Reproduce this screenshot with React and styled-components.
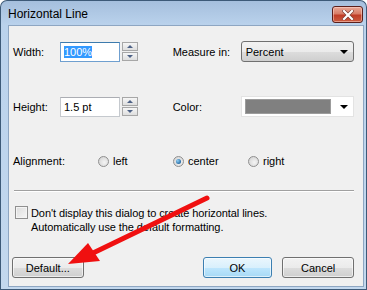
import styled, { createGlobalStyle } from "styled-components";

const Global = createGlobalStyle`
  html, body { margin: 0; padding: 0; background: #fff; }
  body { font-family: "Liberation Sans", Arial, sans-serif; font-size: 11px; color: #000; }
`;

const Window = styled.div`
  position: relative;
  width: 367px;
  height: 290px;
  box-sizing: border-box;
  border: 1px solid #3d5a78;
  border-bottom: none;
  border-radius: 7px 7px 0 0;
  background: linear-gradient(180deg, #a5bfdd 0px, #bad2ec 24px, #c3d8ee 100%);
  display: flex;
  flex-direction: column;
  overflow: hidden;
`;

const TitleBar = styled.div`
  height: 24px;
  display: flex;
  align-items: center;
  justify-content: space-between;
  padding: 0 3px 0 7px;
  flex-shrink: 0;
`;

const Title = styled.div`
  font-size: 12px;
  color: #000;
  padding-top: 1px;
`;

const CloseButton = styled.div`
  width: 31px;
  height: 17px;
  margin-top: 3px;
  box-sizing: border-box;
  border: 1px solid #5b1f1b;
  border-radius: 3px;
  background: linear-gradient(180deg, #e9a898 0%, #d77c66 45%, #c03d27 55%, #cb5c40 100%);
  box-shadow: inset 0 0 0 1px rgba(255, 220, 210, 0.5);
  display: flex;
  align-items: center;
  justify-content: center;
`;

const Content = styled.div`
  flex: 1;
  margin: 0 2px 2px 7px;
  background: #f0f0f0;
  border: 1px solid #8ea6c2;
  position: relative;
`;

const Bottom = styled.div`
  height: 1px;
  background: #3d5a78;
`;

const Form = styled.div`
  padding: 15px 9px 0 4px;
`;

const FieldRow = styled.div`
  display: flex;
  align-items: center;
  height: 21px;
  margin-bottom: ${p => p.$gap || 0}px;
`;

const Label = styled.div`
  width: ${p => p.$w}px;
  flex-shrink: 0;
`;

const TextBox = styled.div`
  width: 60px;
  height: 20px;
  box-sizing: border-box;
  border: 1px solid ${p => (p.$focus ? "#6f9fcf" : "#c5c9ce")};
  border-top-color: ${p => (p.$focus ? "#3d7bad" : "#abadb3")};
  background: #fff;
  display: flex;
  align-items: center;
  padding-left: 3px;
`;

const Selected = styled.span`
  background: #3399ff;
  color: #fff;
`;

const Spin = styled.div`
  display: flex;
  flex-direction: column;
  gap: 1px;
  margin-left: 2px;
  margin-right: 35px;
`;

const SpinBtn = styled.div`
  width: 16px;
  height: 9px;
  box-sizing: border-box;
  border: 1px solid #a7a7a7;
  background: linear-gradient(180deg, #f6f6f6, #dedede);
  display: flex;
  align-items: center;
  justify-content: center;
`;

const Tri = styled.div`
  width: 0;
  height: 0;
  border-left: ${p => p.$size || 3}px solid transparent;
  border-right: ${p => p.$size || 3}px solid transparent;
  ${p => (p.$up ? "border-bottom" : "border-top")}: ${p => p.$size || 3}px solid ${p => p.$color || "#4d6185"};
`;

const Combo = styled.div`
  width: 114px;
  height: 21px;
  box-sizing: border-box;
  border: 1px solid ${p => (p.$flat ? "#e3e3e3" : "#707070")};
  border-radius: ${p => (p.$flat ? 0 : 3)}px;
  background: ${p => (p.$flat ? "#fff" : "linear-gradient(180deg, #f2f2f2 0%, #ebebeb 50%, #dddddd 51%, #cfcfcf 100%)")};
  display: flex;
  align-items: center;
  padding: 0 5px 0 3px;
  gap: 4px;
`;

const ComboText = styled.div`
  flex: 1;
  padding-left: 1px;
`;

const Swatch = styled.div`
  flex: 1;
  height: 13px;
  background: #808080;
  border: 1px solid #9c9c9c;
  margin-right: 5px;
`;

const RadioRow = styled.div`
  display: flex;
  align-items: center;
  margin-top: 36px;
  height: 16px;
`;

const RadioItem = styled.label`
  display: flex;
  align-items: center;
  gap: 4px;
  width: 75px;
`;

const RadioCircle = styled.div`
  width: 11px;
  height: 11px;
  border-radius: 50%;
  box-sizing: border-box;
  border: 1px solid #8f8f8f;
  background: radial-gradient(circle at 60% 60%, #f4f4f4 0%, #d6d6d6 80%);
  display: flex;
  align-items: center;
  justify-content: center;
`;

const RadioDot = styled.div`
  width: 5px;
  height: 5px;
  border-radius: 50%;
  background: radial-gradient(circle at 35% 35%, #8fd0f5, #1a5e9b 80%);
`;

const Separator = styled.div`
  margin: 21px 0 0 1px;
  height: 1px;
  background: #a0a0a0;
  border-bottom: 1px solid #fff;
`;

const CheckRow = styled.div`
  display: flex;
  align-items: flex-start;
  margin-top: 14px;
  padding-left: 2px;
  gap: 3px;
  line-height: 14px;
  letter-spacing: -0.08px;
`;

const CheckBox = styled.div`
  width: 13px;
  height: 13px;
  box-sizing: border-box;
  border: 1px solid #8f8f8f;
  background: linear-gradient(135deg, #dcdcdc, #f6f6f6);
  box-shadow: inset 0 0 0 1px #f4f4f4;
  flex-shrink: 0;
`;

const Buttons = styled.div`
  display: flex;
  align-items: center;
  margin-top: 23px;
`;

const Button = styled.div`
  width: ${p => p.$w || 72}px;
  height: 21px;
  box-sizing: border-box;
  border: 1px solid ${p => (p.$default ? "#3c7fb1" : "#707070")};
  border-radius: 3px;
  background: ${p =>
    p.$default
      ? "linear-gradient(180deg, #eaf6fd 0%, #d9f0fc 50%, #bee6fd 51%, #a7d9f5 100%)"
      : "linear-gradient(180deg, #f2f2f2 0%, #ebebeb 50%, #dddddd 51%, #cfcfcf 100%)"};
  box-shadow: inset 0 0 0 1px rgba(255, 255, 255, 0.6);
  display: flex;
  align-items: center;
  justify-content: center;
  margin-left: ${p => p.$ml || 0}px;
`;

const Arrow = styled.svg`
  position: absolute;
  left: 0;
  top: 0;
  pointer-events: none;
`;

function Spinner() {
  return (
    <Spin>
      <SpinBtn><Tri $up /></SpinBtn>
      <SpinBtn><Tri /></SpinBtn>
    </Spin>
  );
}

function Radio({ checked, children }) {
  return (
    <RadioItem>
      <RadioCircle>{checked && <RadioDot />}</RadioCircle>
      {children}
    </RadioItem>
  );
}

export default function App() {
  return (
    <>
      <Global />
      <Window>
        <TitleBar>
          <Title>Horizontal Line</Title>
          <CloseButton>
            <svg width="12" height="10" viewBox="0 0 12 10">
              <path d="M2 1 L10 9 M10 1 L2 9" stroke="#7a3a30" strokeWidth="3.4" strokeLinecap="square" />
              <path d="M2 1 L10 9 M10 1 L2 9" stroke="#fff" strokeWidth="2.2" strokeLinecap="square" />
            </svg>
          </CloseButton>
        </TitleBar>
        <Content>
          <Form>
            <FieldRow $gap={34}>
              <Label $w={47}>Width:</Label>
              <TextBox $focus><Selected>100%</Selected></TextBox>
              <Spinner />
              <Label $w={68}>Measure in:</Label>
              <Combo>
                <ComboText>Percent</ComboText>
                <Tri $color="#000" $size={4} />
              </Combo>
            </FieldRow>
            <FieldRow>
              <Label $w={47}>Height:</Label>
              <TextBox>1.5 pt</TextBox>
              <Spinner />
              <Label $w={68}>Color:</Label>
              <Combo $flat>
                <Swatch />
                <Tri $color="#000" $size={4} />
              </Combo>
            </FieldRow>
            <RadioRow>
              <Label $w={85}>Alignment:</Label>
              <Radio>left</Radio>
              <Radio checked>center</Radio>
              <Radio>right</Radio>
            </RadioRow>
            <Separator />
            <CheckRow>
              <CheckBox />
              <div>
                Don't display this dialog to create horizontal lines.
                <br />
                Automatically use the default formatting.
              </div>
            </CheckRow>
            <Buttons>
              <Button $w={72} $ml={-1}>Default...</Button>
              <Button $w={70} $ml={119} $default>OK</Button>
              <Button $w={72} $ml={10}>Cancel</Button>
            </Buttons>
          </Form>
        </Content>
        <Bottom />
        <Arrow width="367" height="290" viewBox="0 0 367 290">
          <line x1="206" y1="197" x2="90" y2="253" stroke="#f01010" strokeWidth="5" strokeLinecap="round" />
          <polygon points="67,263 87,242 99,260" fill="#f01010" />
        </Arrow>
      </Window>
    </>
  );
}
